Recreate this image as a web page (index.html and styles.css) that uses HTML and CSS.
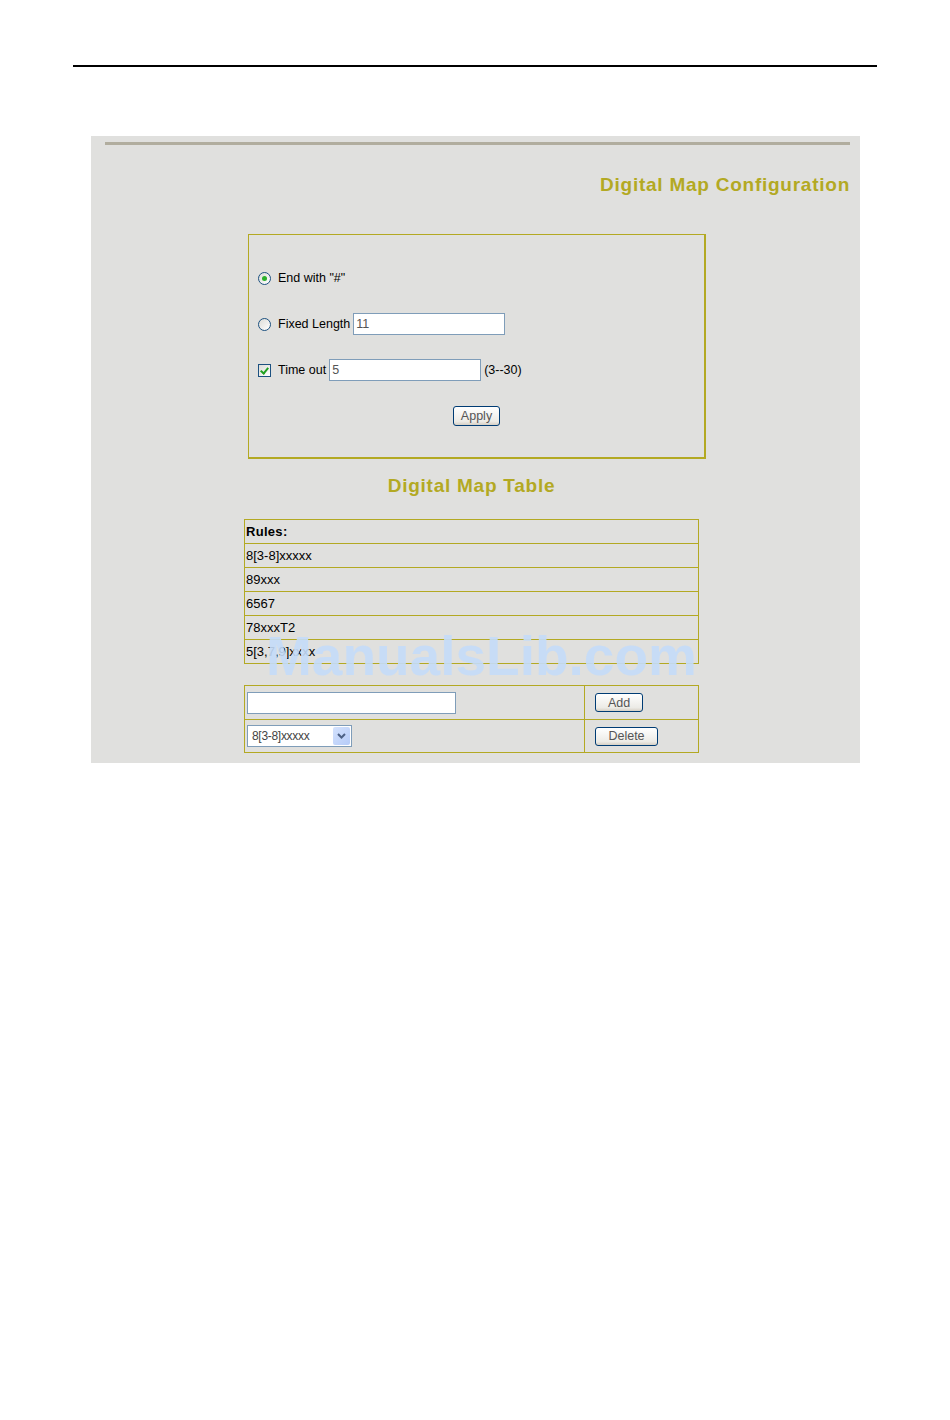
FILE: index.html
```html
<!DOCTYPE html>
<html lang="en">
<head>
    <meta charset="UTF-8">
    <meta name="viewport" content="width=device-width, initial-scale=1.0">
    <title>Digital Map Configuration</title>
    <link rel="stylesheet" href="styles.css">
</head>
<body>
    <div class="page-rule"></div>

    <div class="panel">
        <div class="panel-rule"></div>
        <h1 class="title title-right">Digital Map Configuration</h1>

        <form class="config-box">
            <label class="row">
                <input type="radio" name="endmode" class="radio" checked>
                <span>End with "#"</span>
            </label>
            <label class="row">
                <input type="radio" name="endmode" class="radio">
                <span>Fixed Length</span>
                <input type="text" class="text-input" value="11">
            </label>
            <label class="row">
                <input type="checkbox" class="check" checked>
                <span>Time out</span>
                <input type="text" class="text-input" value="5">
                <span>(3--30)</span>
            </label>
            <div class="row row-center">
                <button type="button" class="btn btn-apply">Apply</button>
            </div>
        </form>

        <h2 class="title title-center">Digital Map Table</h2>

        <table class="rules">
            <tr><th>Rules:</th></tr>
            <tr><td>8[3-8]xxxxx</td></tr>
            <tr><td>89xxx</td></tr>
            <tr><td>6567</td></tr>
            <tr><td>78xxxT2</td></tr>
            <tr><td>5[3,7,9]xxxx</td></tr>
        </table>

        <table class="edit">
            <tr class="edit-row-1">
                <td class="edit-main"><input type="text" class="text-input rule-input"></td>
                <td class="edit-side"><button type="button" class="btn btn-add">Add</button></td>
            </tr>
            <tr class="edit-row-2">
                <td class="edit-main">
                    <div class="select">
                        <span class="select-value">8[3-8]xxxxx</span>
                        <span class="select-arrow">
                            <svg width="9" height="6" viewBox="0 0 9 6"><path d="M1 1 L4.5 4.5 L8 1" fill="none" stroke="#4d6185" stroke-width="2"/></svg>
                        </span>
                    </div>
                </td>
                <td class="edit-side"><button type="button" class="btn btn-delete">Delete</button></td>
            </tr>
        </table>
    </div>

    <div class="watermark">ManualsLib.com</div>
</body>
</html>
```

FILE: styles.css
```css
body {
    margin: 0;
    font-family: "Liberation Sans", Arial, sans-serif;
    background-color: #ffffff;
    color: #000;
}
.page-rule {
    margin: 65px 0 0 73px;
    width: 804px;
    border-top: 2px solid #000;
}
.panel {
    margin: 69px 0 0 91px;
    width: 769px;
    padding: 6px 0 10px 0;
    background-color: #e0e0de;
}
.panel-rule {
    margin: 0 10px 0 14px;
    height: 3px;
    background-color: #b1ad9e;
}
.title {
    margin: 0;
    font-size: 19px;
    line-height: 24px;
    font-weight: bold;
    letter-spacing: 0.75px;
    color: #b3a923; /* olive headings */
}
.title-right {
    margin-top: 28px;
    padding-right: 10px;
    text-align: right;
}
.title-center {
    margin: 15px 0 0 0;
    padding-right: 8px;
    text-align: center;
}
.config-box {
    margin: 37px 0 0 157px;
    width: 447px;
    padding: 31px 0 29px 8px;
    border: 1px solid #b3a923;
    border-right-width: 2px;
    border-bottom-width: 2px;
    display: flex;
    flex-direction: column;
    gap: 22px;
    font-size: 12.5px;
}
.row {
    height: 24px;
    display: flex;
    align-items: center;
    gap: 0;
}
.row-center {
    justify-content: center;
    padding-right: 8px;
}
.radio, .check {
    appearance: none;
    -webkit-appearance: none;
    margin: 0 7px 0 1px;
    width: 13px;
    height: 13px;
    background: linear-gradient(135deg, #dcdcd7, #ffffff);
    border: 1px solid #1c5180;
    flex: none;
}
.radio {
    border-radius: 50%;
    position: relative;
}
.radio:checked::after {
    content: "";
    position: absolute;
    left: 3px;
    top: 3px;
    width: 5px;
    height: 5px;
    border-radius: 50%;
    background-color: #2bb02b;
}
.check {
    position: relative;
}
.check:checked::after {
    content: "";
    position: absolute;
    left: 3px;
    top: 1px;
    width: 3px;
    height: 6px;
    border: solid #21a121;
    border-width: 0 2px 2px 0;
    transform: rotate(40deg);
}
.text-input {
    box-sizing: border-box;
    height: 22px;
    width: 152px;
    margin: 0 3px 0 3px;
    padding: 0 2px;
    border: 1px solid #7f9db9;
    background-color: #fff;
    font-family: "Liberation Sans", Arial, sans-serif;
    font-size: 12.5px;
    color: #555;
}
.btn {
    box-sizing: border-box;
    height: 20px;
    padding: 0;
    border: 1px solid #003c74;
    border-radius: 3px;
    background: linear-gradient(#ffffff, #ecebe6 80%, #d6d0c5);
    font-family: "Liberation Sans", Arial, sans-serif;
    font-size: 12.5px;
    color: #555;
    cursor: pointer;
}
.btn-apply {
    width: 47px;
}
.btn-add {
    width: 48px;
    height: 19px;
}
.btn-delete {
    width: 63px;
    height: 19px;
}
.rules, .edit {
    margin-left: 153px;
    width: 455px;
    border-collapse: collapse;
    font-size: 13px;
}
.rules {
    margin-top: 21px;
}
.rules th, .rules td {
    height: 23px;
    padding: 0 0 0 1px;
    border: 1px solid #b3a923;
    text-align: left;
}
.rules th {
    font-weight: bold;
    letter-spacing: 0.3px;
}
.edit {
    margin-top: 21px;
}
.edit td {
    border: 1px solid #b3a923;
    padding: 0;
}
.edit-row-1 td {
    height: 33px;
}
.edit-row-2 td {
    height: 32px;
}
.edit-main {
    width: 339px;
    padding-left: 2px;
}
.edit-side {
    padding-left: 10px !important;
}
.rule-input {
    width: 209px;
    margin: 0 0 0 2px;
}
.select {
    margin-left: 2px;
    box-sizing: border-box;
    width: 105px;
    height: 22px;
    border: 1px solid #7f9db9;
    background-color: #fff;
    display: flex;
    align-items: stretch;
}
.select-value {
    flex: 1;
    padding-left: 4px;
    line-height: 20px;
    font-size: 12px;
    color: #444;
    letter-spacing: -0.3px;
    overflow: hidden;
    white-space: nowrap;
}
.select-arrow {
    width: 17px;
    margin: 1px;
    border-radius: 2px;
    background: linear-gradient(135deg, #d4e2fd, #b5cbf8);
    display: flex;
    align-items: center;
    justify-content: center;
}
.watermark {
    position: absolute;
    left: 266px;
    top: 629px;
    font-size: 55px;
    line-height: 55px;
    font-weight: bold;
    color: rgba(196, 219, 248, 0.9);
    white-space: nowrap;
    pointer-events: none;
}
```
